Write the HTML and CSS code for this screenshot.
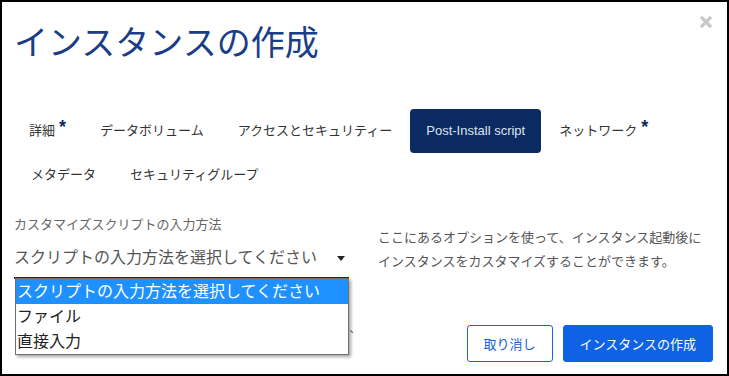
FILE: index.html
```html
<!DOCTYPE html>
<html lang="ja">
<head>
  <meta charset="UTF-8" />
  <title>インスタンスの作成</title>
  <link rel="stylesheet" href="styles.css">
</head>
<body>
  <div class="modal">
    <header class="modal-header">
      <h1 class="modal-title">インスタンスの作成</h1>
      <span class="close" aria-label="閉じる">
        <svg width="12" height="12" viewBox="0 0 12 12"><path d="M2 2L10 10M10 2L2 10" stroke="#c9c9c9" stroke-width="3.2" stroke-linecap="square" /></svg>
      </span>
    </header>

    <nav class="tabs">
      <a class="tab">詳細<span class="req">*</span></a>
      <a class="tab">データボリューム</a>
      <a class="tab">アクセスとセキュリティー</a>
      <a class="tab active">Post-Install script</a>
      <a class="tab">ネットワーク<span class="req">*</span></a>
      <a class="tab">メタデータ</a>
      <a class="tab">セキュリティグループ</a>
    </nav>

    <div class="modal-body">
      <div class="field">
        <label class="field-label">カスタマイズスクリプトの入力方法</label>
        <div class="select-wrap">
          <div class="select">スクリプトの入力方法を選択してください<span class="caret"></span></div>
          <ul class="select-menu">
            <li class="option selected">スクリプトの入力方法を選択してください</li>
            <li class="option">ファイル</li>
            <li class="option">直接入力</li>
          </ul>
        </div>
        <p class="help">「ファイル」を選ぶとスクリプトファイルをアップロードでき、「直接入力」を選ぶとテキストエリアに入力できます。</p>
      </div>

      <div class="side">
        <p class="desc">ここにあるオプションを使って、インスタンス起動後に<br>インスタンスをカスタマイズすることができます。</p>
        <div class="actions">
          <button class="btn btn-outline">取り消し</button>
          <button class="btn btn-primary">インスタンスの作成</button>
        </div>
      </div>
    </div>
  </div>
</body>
</html>
```

FILE: styles.css
```css
body {
  margin: 0;
  font-family: "Liberation Sans", "Noto Sans CJK JP", sans-serif;
  background: #fff;
}
.modal {
  box-sizing: border-box;
  width: 729px;
  height: 376px;
  border: 2px solid #000;
  padding: 0 14px 0 11px;
  display: flex;
  flex-direction: column;
}
.modal-header {
  display: flex;
  justify-content: space-between;
  align-items: flex-start;
  padding: 14px 0 0 1px;
}
.modal-title {
  margin: 7px 0 0;
  font-size: 34px;
  line-height: 40px;
  font-weight: 400;
  color: #1a3e86;
}
.close {
  display: block;
  margin-right: 1px;
  width: 12px;
  height: 12px;
  cursor: pointer;
}
.close svg {
  display: block;
}
.tabs {
  display: flex;
  flex-wrap: wrap;
  margin-top: 46px;
}
.tab {
  padding: 0 16px;
  height: 44px;
  line-height: 44px;
  font-size: 13px;
  color: #333;
  border-radius: 4px;
}
.tab + .tab {
  margin-left: 2px;
}
.tab.active {
  background: #0b2a61;
  color: #dce4f0;
}
.req {
  color: #0b2a61;
  font-weight: bold;
  font-size: 18px;
  line-height: 1;
  margin-left: 4px;
  vertical-align: 2px;
}
.modal-body {
  display: grid;
  grid-template-columns: 335px 1fr;
  column-gap: 29px;
  margin-top: 19px;
  padding-left: 1px;
}
.field {
  padding-bottom: 9px;
}
.field-label {
  display: block;
  font-size: 13px;
  line-height: 18px;
  color: #666;
}
.select-wrap {
  position: relative;
  margin-top: 6px;
}
.select {
  display: flex;
  justify-content: space-between;
  align-items: center;
  padding: 6px 4px 7px 0;
  font-size: 16px;
  line-height: 24px;
  color: #555;
  border-bottom: 2px solid #0b2a61;
}
.caret {
  border-left: 4px solid transparent;
  border-right: 4px solid transparent;
  border-top: 5px solid #222;
}
.select-menu {
  position: absolute;
  left: 1px;
  top: calc(100% - 1px);
  box-sizing: border-box;
  width: 334px;
  margin: 0;
  padding: 0;
  list-style: none;
  background: #fff;
  border: 1px solid #707070;
  box-shadow: 2px 2px 3px rgba(0, 0, 0, 0.35);
}
.option {
  height: 25px;
  line-height: 25px;
  padding-left: 1px;
  font-size: 16px;
  color: #222;
}
.option.selected {
  background: #1e90ff;
  color: #fff;
}
.help {
  margin: 42px 0 0;
  width: 352px;
  font-size: 12px;
  line-height: 16px;
  color: #777;
}
.side {
  display: flex;
  flex-direction: column;
  padding-top: 10px;
}
.desc {
  margin: 0;
  font-size: 13px;
  line-height: 24px;
  color: #555;
}
.actions {
  margin-top: auto;
  display: flex;
  justify-content: flex-end;
  gap: 10px;
}
.btn {
  height: 37px;
  padding: 0 16px;
  font-family: inherit;
  font-size: 13px;
  border-radius: 3px;
  cursor: pointer;
}
.btn-outline {
  background: #fff;
  border: 1px solid #1565e0;
  color: #1a5fd6;
}
.btn-primary {
  background: #0e62e3;
  border: 1px solid #0e62e3;
  color: #fff;
}
```
